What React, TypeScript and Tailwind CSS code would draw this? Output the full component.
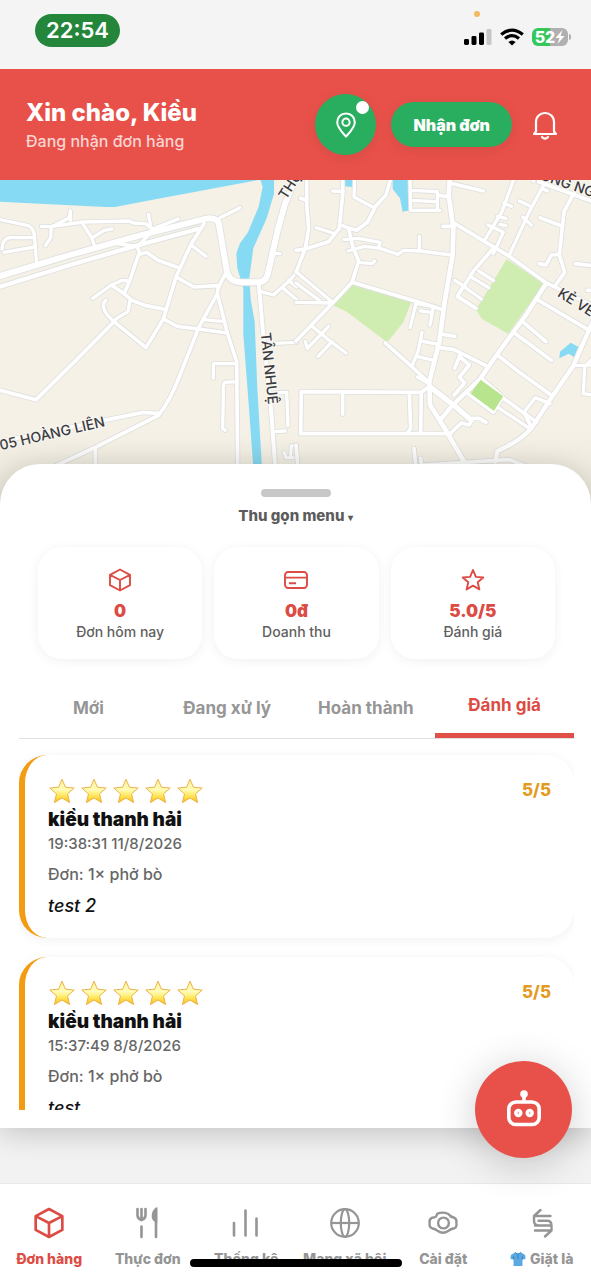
import React, { useState } from 'react';

type Road = { d: string; w: number };

interface Review {
    id: number;
    name: string;
    time: string;
    order: string;
    comment: string;
}

const reviews: Review[] = [
    { id: 1, name: 'kiều thanh hải', time: '19:38:31 11/8/2026', order: 'Đơn: 1× phở bò', comment: 'test 2' },
    { id: 2, name: 'kiều thanh hải', time: '15:37:49 8/8/2026', order: 'Đơn: 1× phở bò', comment: 'test' },
];

const tabs = ['Mới', 'Đang xử lý', 'Hoàn thành', 'Đánh giá'];

// West half of the map
const westRoads: Road[] = [
    { w: 9, d: 'M0 134 L85 152 Q103 162 104 190 L110 268' },
    { w: 9, d: 'M104 188 L30 188 Q8 190 6 222 M104 216 L12 232' },
    { w: 9, d: 'M124 154 L150 155 L250 141 L388 138 L400 144 L438 146 L460 166 L412 214' },
    { w: 9, d: 'M136 212 L152 188 L154 156 L208 128 L211 108 L212 136' },
    { w: 9, d: 'M248 146 L274 186 L286 218 M278 188 L312 166 L336 162' },
    { w: 9, d: 'M445 118 L454 162 M454 164 L534 132' },
    { w: 9, d: 'M350 206 L412 214' },
    { w: 10, d: 'M412 214 L418 232 L388 320 L372 356' },
    { w: 10, d: 'M418 238 L440 232 L474 256 L536 278' },
    { w: 10, d: 'M612 146 L574 206 L528 306 L490 432 L438 518 L342 440' },
    { w: 9, d: 'M576 212 L618 244' },
    { w: 9, d: 'M278 370 L334 330 L368 316 L386 318' },
    { w: 10, d: 'M334 330 L372 356 L396 376 L438 392 L490 402' },
    { w: 9, d: 'M390 376 L384 410 L350 430 L342 440 L322 420 Q300 388 318 376' },
    { w: 10, d: 'M0 646 L108 674 L230 554 L342 440' },
    { w: 10, d: 'M528 306 L582 336 L654 332' },
    { w: 10, d: 'M490 432 L532 454 L594 462 L682 474' },
    { w: 10, d: 'M674 300 L654 340 L652 356 L682 474 L710 560 L713 880' },
    { w: 10, d: 'M652 356 L596 458 L540 600 Q510 680 474 722 L288 816 L150 880' },
    { w: 9, d: 'M612 434 L674 440' },
    { w: 9, d: 'M706 566 L640 566 L640 610 M710 620 L674 622 Q668 628 670 660 L668 760 L676 766' },
    { w: 10, d: 'M0 800 L430 712 L480 716 M286 818 L286 880' },
    { w: 9, d: 'M660 128 L720 98' },
    { w: 12, d: 'M0 335 L210 270 L410 212 L594 162' },
    { w: 17, d: 'M-10 306 L210 240 L410 184 L606 134 Q646 122 656 144 L680 286 Q686 320 722 322 L778 322 Q800 320 806 286 L832 170 L854 90 L890 0' },
    { w: 11, d: 'M776 322 L788 460 L812 690 L826 880' },
    { w: 9, d: 'M820 236 L840 236 M784 350 L820 360 L870 316 L890 290 M848 338 L890 374 M866 316 L890 336' },
    { w: 9, d: 'M806 506 L890 502 M824 654 L860 652 L864 752 M820 770 L856 768' },
    { w: 8, d: 'M852 832 L858 848 L890 848 M890 812 L874 812 L872 842' },
];

// East half of the map
const eastRoads: Road[] = [
    { w: 10, d: 'M32 10 L32 90 L38 160 L28 220 L0 292 M14 70 L32 76 M0 226 L28 222 L98 200 L130 160 L140 60 L140 10' },
    { w: 9, d: 'M110 48 L142 50 M60 158 L110 174 M176 10 L174 66 L234 98' },
    { w: 10, d: 'M284 10 L270 60 L240 92 L214 142 L182 166 L154 158 L140 152' },
    { w: 10, d: 'M158 160 L170 214 L188 258 L168 322 L110 384 L0 498' },
    { w: 9, d: 'M144 194 L188 190 L252 202 L248 216 M156 228 L206 214 L252 220 L306 238 L322 226 L372 228 L466 240 M370 184 L370 226 M188 262 L228 266 L236 258' },
    { w: 9, d: 'M0 290 L108 380 M0 324 L70 376 M0 382 L110 384' },
    { w: 9, d: 'M342 10 L344 106 L432 106 M344 46 L424 50 L424 104 M344 76 L420 80 M424 60 L460 66' },
    { w: 10, d: 'M168 322 L370 382 L440 404' },
    { w: 9, d: 'M360 386 L342 458 M362 386 L412 394 L402 450 M374 408 L404 412' },
    { w: 9, d: 'M48 454 L92 490 L150 534 M98 454 L34 520 L28 500 M108 500 L66 544' },
    { w: 10, d: 'M268 504 L344 572 L400 624' },
    { w: 9, d: 'M378 472 L366 530 L348 572 M376 498 L426 508 M364 544 L412 556 M364 606 L396 624' },
    { w: 10, d: 'M392 640 L376 652 L16 650 L14 776 L464 776 M140 652 L140 718 M340 656 L344 760 L334 774 M376 656 L374 774' },
    { w: 13, d: 'M462 0 L458 60 L472 160 L470 240 L446 380 L430 500 L400 620 L402 690 L440 750 L510 870' },
    { w: 10, d: 'M440 154 L474 154 M470 26 L562 48 M442 478 L476 484' },
    { w: 10, d: 'M474 144 L560 196 L640 244 L748 322 L890 392' },
    { w: 9, d: 'M652 16 L618 110 L568 192 M720 0 L712 18 M754 10 L700 110 L640 240 M624 84 L646 94 M604 124 L630 130 M576 150 L622 172 L592 236 M670 78 L700 92 M680 126 L706 150 M736 40 L754 48 M630 152 L612 148' },
    { w: 10, d: 'M590 222 L534 286 L484 364 L540 400' },
    { w: 9, d: 'M548 288 L592 316 M528 308 L578 338 M508 338 L556 372 M476 316 L508 336' },
    { w: 12, d: 'M750 326 L690 420 L606 534 L552 612 L470 690 L432 736' },
    { w: 10, d: 'M680 440 L750 500 M652 472 L766 556 M604 540 L660 584 L762 658 M724 374 L880 466' },
    { w: 10, d: 'M728 20 L890 80' },
    { w: 10, d: 'M836 50 L804 110 L790 240 L806 292 L776 334 M732 128 L796 152 M730 266 L750 270 L766 240 L784 238 M838 266 L890 272 M874 346 L890 346' },
    { w: 12, d: 'M890 440 L832 572 L770 662 L706 760 Q670 800 604 828 L598 860' },
    { w: 9, d: 'M836 572 L890 570 M890 550 L866 576 L862 656 L890 660' },
    { w: 10, d: 'M432 518 L474 524 L570 572 M492 540 L476 580 M494 548 L520 570 L490 606 L506 624 L474 660' },
    { w: 10, d: 'M556 610 L620 666 L592 712 L516 656 M620 668 L686 716 L704 752 M592 690 L620 668' },
    { w: 9, d: 'M610 700 L700 760 M682 714 L718 668 L762 686 M686 714 L722 742' },
    { w: 15, d: 'M400 634 L470 688 L526 736' },
    { w: 10, d: 'M464 774 L496 744 L520 750 L530 730 L550 730 L570 742' },
    { w: 10, d: 'M380 870 L640 854 L760 900 M354 820 L360 880 M374 850 L378 880 M0 810 L6 880' },
];

const RoadLayer = ({ roads }: { roads: Road[] }) => (
    <g fill="none" strokeLinecap="round" strokeLinejoin="round">
        {roads.map((r, i) => (
            <path key={`edge-${i}`} d={r.d} stroke="#dedfdf" strokeWidth={r.w + 6} />
        ))}
        {roads.map((r, i) => (
            <path key={`road-${i}`} d={r.d} stroke="#ffffff" strokeWidth={r.w + 1} />
        ))}
    </g>
);

const StreetMap = () => (
    <svg viewBox="0 15 1773 960" preserveAspectRatio="xMidYMin slice" className="block h-full w-full" role="img" aria-label="Bản đồ">
        <defs>
            <linearGradient id="fade" x1="0" y1="0" x2="0" y2="1">
                <stop offset="0" stopColor="#8a8370" stopOpacity="0" />
                <stop offset="1" stopColor="#8a8370" stopOpacity="0.1" />
            </linearGradient>
        </defs>
        <rect x="0" y="0" width="1773" height="980" fill="#f5f1e6" />
        <g fill="#86daf4">
            <path d="M0 0 H790 L776 15 L470 72 L345 96 H315 L0 80 Z" />
            <path d="M776 0 H822 V56 L800 130 L760 220 L748 310 L752 372 L764 440 L772 640 L786 880 H760 L744 660 L730 480 V340 L712 280 L709 235 L720 205 L744 172 L776 95 L788 35 Z" />
            <path d="M1034 0 H1058 V36 L1034 34 Z M1178 0 H1228 V106 L1208 110 L1200 70 L1178 42 Z" />
            <path d="M1678 550 L1680 530 L1712 503 L1736 516 L1722 546 L1706 536 Z" />
        </g>
        <g fill="#cfedb0">
            <path d="M998 390 L1058 326 L1234 380 L1210 442 L1162 502 L1040 410 Z" />
            <path d="M1520 252 L1632 326 L1524 476 L1446 432 L1428 404 Z" />
        </g>
        <RoadLayer roads={westRoads} />
        <g transform="translate(888 0)">
            <RoadLayer roads={eastRoads} />
        </g>
        <path d="M1442 614 L1510 664 L1482 708 L1412 656 Z" fill="#b8e48e" />
        <g
            fill="#3b3b40"
            stroke="#f8f6f0"
            strokeWidth="8"
            paintOrder="stroke"
            fontFamily="Inter, sans-serif"
            fontWeight="500"
            fontSize="42"
        >
            <text transform="translate(2 826) rotate(-13)">05 HOÀNG LIÊN</text>
            <text transform="translate(782 474) rotate(84)">TÂN NHUỆ</text>
            <text transform="translate(858 76) rotate(-57)">THỤY</text>
            <text transform="translate(1618 12) rotate(19)">ÔNG NGẠC</text>
            <text transform="translate(1670 362) rotate(32)">KẺ VẼ</text>
        </g>
        <rect x="0" y="760" width="1773" height="220" fill="url(#fade)" />
    </svg>
);

const CubeIcon = ({ className }: { className: string }) => (
    <svg viewBox="0 0 24 24" className={className} fill="none" stroke="currentColor" strokeLinejoin="round">
        <path d="M12 1.5 L22 6.8 V17.2 L12 22.5 L2 17.2 V6.8 Z M2 6.8 L12 12 L22 6.8 M12 12 V22.5" />
    </svg>
);

const CardIcon = ({ className }: { className: string }) => (
    <svg viewBox="0 0 24 24" className={className} fill="none" stroke="currentColor" strokeLinejoin="round">
        <rect x="1" y="4" width="22" height="16" rx="3.2" />
        <path d="M1 9.6 H23 M5 15.3 H12" />
    </svg>
);

const StarIcon = ({ className }: { className: string }) => (
    <svg viewBox="0 0 24 24" className={className} fill="none" stroke="currentColor" strokeLinejoin="round">
        <path d="M12 2 L14.9 8.9 L22.3 9.5 L16.7 14.3 L18.4 21.4 L12 17.6 L5.6 21.4 L7.3 14.3 L1.7 9.5 L9.1 8.9 Z" />
    </svg>
);

const ForkIcon = () => (
    <svg viewBox="0 0 32 32" className="h-8 w-8" fill="none" stroke="currentColor" strokeWidth="2.6" strokeLinecap="round">
        <path d="M5.5 2 V8.5 Q5.5 11.5 9.5 13 Q13.5 11.5 13.5 8.5 V2 M9.5 2 V13 M9.5 19.5 V30 M24 2 V30" />
        <path d="M24 2.4 Q21 4.5 21 9.5 Q21 12.5 24 14 Z" fill="currentColor" />
    </svg>
);

const ChartIcon = () => (
    <svg viewBox="0 0 32 32" className="h-8 w-8" fill="none" stroke="currentColor" strokeWidth="2.6" strokeLinecap="round">
        <path d="M4 16 V28.5 M15.5 3.5 V28.5 M26.5 11.5 V28.5" />
    </svg>
);

const GlobeIcon = () => (
    <svg viewBox="0 0 32 32" className="h-8 w-8" fill="none" stroke="currentColor" strokeWidth="2.2">
        <circle cx="16" cy="16" r="13.8" />
        <ellipse cx="16" cy="16" rx="4.2" ry="13.8" />
        <path d="M2.2 16 H29.8" />
    </svg>
);

const SettingsIcon = () => (
    <svg viewBox="0 0 32 32" className="h-8 w-8" fill="none" stroke="currentColor" strokeWidth="2.4" strokeLinejoin="round">
        <circle cx="16.5" cy="16" r="5.4" />
        <path d="M11 6.4 Q16 4.6 21.4 7 Q23.4 10 27.4 10.8 Q30 12 29.4 16 Q30 20.4 27.4 21.2 Q23.4 21.8 21.2 24 Q16 27.4 10.8 24 Q8.6 21.8 4.8 21.2 Q2 20.2 2.6 16 Q2 12 4.8 10.8 Q8.8 10.6 9.6 8.6 Q9.6 7 11 6.4 Z" />
    </svg>
);

const SwapIcon = () => (
    <svg viewBox="0 0 32 32" className="h-8 w-8" fill="none" stroke="currentColor" strokeWidth="2.4" strokeLinecap="round" strokeLinejoin="round">
        <path d="M14.5 3 L8 9 H24.5 M8 9 V13.5 Q8 18.5 12.5 18.5 H23.5 M12.5 13.8 H21 Q25.5 13.8 25.5 18.5 V23.5 L19 29.5 M9 23.5 H25.5 M9 18.5 H12.5" />
    </svg>
);

const ShirtIcon = () => (
    <svg viewBox="0 0 18 18" className="h-4 w-4">
        <path d="M6 1.5 L1 4.5 L0.5 9 L4 9.5 V17 H14 V9.5 L17.5 9 L17 4.5 L12 1.5 Q9 4 6 1.5 Z" fill="#5aa9e0" />
        <path d="M6 1.5 Q9 5.5 12 1.5 M9 4.5 V9 M4.2 6 V9.5 M13.8 6 V9.5" fill="none" stroke="#2f78b4" strokeWidth="0.9" />
    </svg>
);

const RatingStars = () => (
    <div className="flex h-7 items-center gap-1" role="img" aria-label="5 sao">
        {[0, 1, 2, 3, 4].map(i => (
            <svg key={i} viewBox="0 0 28 28" className="h-7 w-7">
                <defs>
                    <linearGradient id="gold" x1="0" y1="0" x2="0" y2="1">
                        <stop offset="0" stopColor="#fff0a8" />
                        <stop offset="0.45" stopColor="#fffcb8" />
                        <stop offset="0.7" stopColor="#ffe85c" />
                        <stop offset="1" stopColor="#f9b814" />
                    </linearGradient>
                </defs>
                <path
                    d="M14 2.2 L17.4 10.2 L26.2 11 L19.5 16.9 L21.6 25.6 L14 21 L6.4 25.6 L8.5 16.9 L1.8 11 L10.6 10.2 Z"
                    fill="url(#gold)"
                    stroke="#ecb347"
                    strokeWidth="1"
                    strokeLinejoin="round"
                />
            </svg>
        ))}
    </div>
);

const StatusBar = () => (
    <div className="relative flex h-[69px] shrink-0 items-start justify-between bg-[#f4f4f4] pl-[35px] pr-5 pt-[14px]">
        <span className="flex h-[33px] items-center rounded-full bg-[#24863a] px-[11px] text-[22px] font-semibold text-white">22:54</span>
        <span className="absolute right-[111px] top-[11px] h-[6px] w-[6px] rounded-full bg-[#f5b963]" />
        <div className="flex h-[46px] items-center gap-2">
            <svg viewBox="0 0 28 18" className="h-[18px] w-7">
                <rect x="0" y="11" width="5" height="6" rx="1.4" />
                <rect x="7.5" y="8" width="5" height="9" rx="1.4" />
                <rect x="15" y="4.5" width="5" height="12.5" rx="1.4" />
                <rect x="22.5" y="1" width="5" height="16" rx="1.4" fill="#c6c6c6" />
            </svg>
            <svg viewBox="0 0 24 18" className="h-[18px] w-6" fill="none" stroke="#000" strokeWidth="3.2">
                <path d="M1.2 6.6 Q12 -2.4 22.8 6.6 M5 10.6 Q12 4.8 19 10.6" />
                <path d="M8.4 14 Q12 11 15.6 14 L12 17.4 Z" fill="#000" stroke="none" />
            </svg>
            <div className="flex items-center gap-px">
                <div className="flex h-[18px] w-9 items-center justify-center rounded-md bg-linear-to-r from-[#35c759] from-50% to-[#b0b0b0] to-50% text-base font-extrabold text-white">
                    52
                    <svg viewBox="0 0 10 14" className="h-[14px] w-[10px]" fill="#fff">
                        <path d="M7.5 0 L0.5 8 H4.5 L2.5 14 L9.5 6 H5.5 Z" />
                    </svg>
                </div>
                <span className="h-[6px] w-[2px] rounded-r-full bg-[#b0b0b0]" />
            </div>
        </div>
    </div>
);

const App: React.FC = () => {
    const [activeTab, setActiveTab] = useState('Đánh giá');
    const [activeNav, setActiveNav] = useState('Đơn hàng');

    const stats = [
        { label: 'Đơn hôm nay', value: '0', icon: <CubeIcon className="h-6 w-6 stroke-[1.9]" /> },
        { label: 'Doanh thu', value: '0đ', icon: <CardIcon className="h-6 w-6 stroke-[1.9]" /> },
        { label: 'Đánh giá', value: '5.0/5', icon: <StarIcon className="h-6 w-6 stroke-[1.9]" /> },
    ];

    const navItems = [
        { label: 'Đơn hàng', icon: <CubeIcon className="h-8 w-8 stroke-2" /> },
        { label: 'Thực đơn', icon: <ForkIcon /> },
        { label: 'Thống kê', icon: <ChartIcon /> },
        { label: 'Mạng xã hội', icon: <GlobeIcon /> },
        { label: 'Cài đặt', icon: <SettingsIcon /> },
        { label: 'Giặt là', icon: <SwapIcon />, prefix: <ShirtIcon /> },
    ];

    return (
        <div className="relative flex h-screen flex-col overflow-hidden bg-[#f2f2f2] font-['Inter',sans-serif] text-[#111]">
            <StatusBar />

            <header className="flex h-[111px] shrink-0 items-center justify-between bg-[#e8514a] pl-[26px] pr-8 text-white">
                <div>
                    <h1 className="text-2xl leading-8 font-extrabold">Xin chào, Kiều</h1>
                    <p className="text-base leading-6 font-medium text-[#fbd5d2]">Đang nhận đơn hàng</p>
                </div>
                <div className="flex items-center gap-[15px]">
                    <button aria-label="Vị trí" className="relative flex h-[61px] w-[61px] items-center justify-center rounded-full bg-[#29ae60] shadow-[0_3px_14px_rgba(0,0,0,0.08)]">
                        <svg viewBox="0 0 24 28" className="h-7 w-6" fill="none" stroke="currentColor" strokeWidth="2" strokeLinejoin="round">
                            <path d="M12 2.5 C6.8 2.5 3.2 6.3 3.2 11.2 C3.2 16.6 9.4 22.6 12 25.6 C14.6 22.6 20.8 16.6 20.8 11.2 C20.8 6.3 17.2 2.5 12 2.5 Z" />
                            <circle cx="12" cy="11.2" r="3.6" />
                        </svg>
                        <span className="absolute right-[7px] top-[7px] h-[13px] w-[13px] rounded-full bg-white" />
                    </button>
                    <button className="h-[45px] rounded-full bg-[#29ae60] px-[22px] text-base font-black shadow-[0_3px_14px_rgba(0,0,0,0.08)]">Nhận đơn</button>
                    <button aria-label="Thông báo" className="ml-1">
                        <svg viewBox="0 0 28 32" className="h-8 w-7" fill="none" stroke="currentColor" strokeWidth="2.2" strokeLinecap="round" strokeLinejoin="round">
                            <path d="M3 25 H25 L23 22.5 V13 C23 7.5 19 4 14 4 C9 4 5 7.5 5 13 V22.5 Z" />
                            <path d="M11 28 Q14 31.4 17 28" />
                        </svg>
                    </button>
                </div>
            </header>

            <div className="h-80 shrink-0">
                <StreetMap />
            </div>

            {/* Bottom sheet */}
            <main className="relative -mt-9 mb-[55px] flex min-h-0 flex-1 flex-col rounded-t-[40px] bg-white pb-[18px] shadow-[0_5px_30px_rgba(0,0,0,0.2)]">
                <button className="mx-auto flex flex-col items-center gap-2 pt-[25px]">
                    <span className="h-2 w-[70px] rounded-full bg-[#c8c8c8]" />
                    <span className="text-[15px] leading-[22px] font-extrabold text-[#5c5c5c]">
                        Thu gọn menu <span className="text-[10px]">▾</span>
                    </span>
                </button>

                <div className="mt-[19px] grid grid-cols-3 gap-3 pr-9 pl-[38px]">
                    {stats.map(s => (
                        <div key={s.label} className="flex flex-col items-center rounded-3xl bg-white pt-[21px] pb-[17px] shadow-[0_2px_12px_rgba(0,0,0,0.06)]">
                            <span className="text-[#dc4c44]">{s.icon}</span>
                            <strong className="mt-2 text-[17px] leading-[22px] font-black text-[#dc4c44]">{s.value}</strong>
                            <span className="text-sm leading-5 font-medium text-[#5f5f5f]">{s.label}</span>
                        </div>
                    ))}
                </div>

                <div className="mt-5 mr-[17px] ml-[19px] grid grid-cols-4 border-b border-[#e0e0e0]">
                    {tabs.map(tab => (
                        <button
                            key={tab}
                            onClick={() => setActiveTab(tab)}
                            className={`h-[59px] text-[17px] font-bold ${
                                activeTab === tab ? 'border-b-[5px] border-[#e04f48] text-[#dc4c44]' : 'text-[#969696]'
                            }`}
                        >
                            {tab}
                        </button>
                    ))}
                </div>

                <div className="mr-[17px] ml-[19px] min-h-0 flex-1 space-y-[19px] overflow-hidden pt-4">
                    {reviews.map(r => (
                        <article key={r.id} className="rounded-[28px] border-l-[6px] border-[#f39c12] bg-white px-[23px] pt-[22px] pb-5 shadow-[0_2px_12px_rgba(0,0,0,0.06)]">
                            <div className="flex items-center justify-between">
                                <RatingStars />
                                <span className="text-[17px] font-extrabold text-[#e39a20]">5/5</span>
                            </div>
                            <h2 className="pt-px text-[19px] leading-7 font-black">{r.name}</h2>
                            <p className="text-[15px] leading-5 font-medium text-[#666]">{r.time}</p>
                            <p className="mt-2 text-base leading-6 font-medium text-[#666]">{r.order}</p>
                            <p className="mt-2 text-lg leading-6 font-medium italic">{r.comment}</p>
                        </article>
                    ))}
                </div>
            </main>

            <nav className="grid h-[97px] shrink-0 grid-cols-6 border-t border-[#e8e8e8] bg-white">
                {navItems.map(item => (
                    <button
                        key={item.label}
                        onClick={() => setActiveNav(item.label)}
                        className={`flex flex-col items-center pt-[23px] ${activeNav === item.label ? 'text-[#dc4c44]' : 'text-[#959595]'}`}
                    >
                        {item.icon}
                        <span className="mt-[10px] flex items-center gap-1 text-sm leading-5 font-extrabold whitespace-nowrap">
                            {item.prefix}
                            {item.label}
                        </span>
                    </button>
                ))}
            </nav>

            <button aria-label="Trợ lý" className="absolute right-[19px] bottom-[122px] flex h-[97px] w-[97px] items-center justify-center rounded-full bg-[#e8514a] text-white shadow-[0_6px_40px_rgba(0,0,0,0.2)]">
                <svg viewBox="0 0 40 40" className="h-10 w-10" fill="none" stroke="currentColor" strokeWidth="3.6">
                    <rect x="4.8" y="12" width="30.4" height="22.5" rx="7" />
                    <path d="M20 4 V12" />
                    <circle cx="20" cy="4" r="3.8" fill="currentColor" stroke="none" />
                    <circle cx="14.3" cy="23" r="4.2" fill="currentColor" stroke="none" />
                    <circle cx="25.7" cy="23" r="4.2" fill="currentColor" stroke="none" />
                    <circle cx="14.3" cy="23" r="0.7" fill="#e8514a" stroke="none" />
                    <circle cx="25.7" cy="23" r="0.7" fill="#e8514a" stroke="none" />
                </svg>
            </button>

            {/* Home indicator */}
            <span className="absolute bottom-[13px] left-1/2 h-2 w-[212px] -translate-x-1/2 rounded-full bg-black" />
        </div>
    );
};

export default App;
